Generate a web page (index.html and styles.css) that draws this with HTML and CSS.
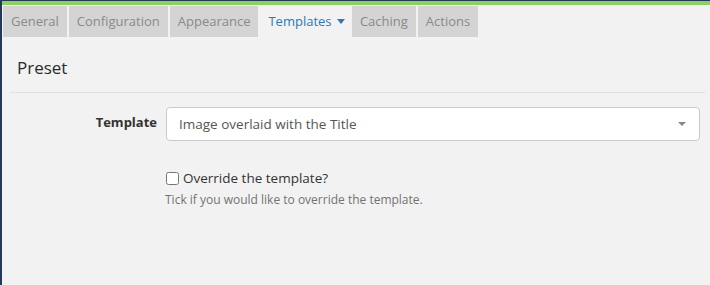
FILE: index.html
```html
<!DOCTYPE html>
<html lang="en">
<head>
  <meta charset="UTF-8">
  <title>Preset - Templates</title>
  <link rel="stylesheet" href="styles.css">
</head>
<body>

  <!-- TOP STRIP -->
  <div class="topbar"></div>

  <!-- TABS -->
  <ul class="tabs">
    <li><a href="#">General</a></li>
    <li><a href="#">Configuration</a></li>
    <li><a href="#">Appearance</a></li>
    <li class="active"><a href="#">Templates <span class="caret"></span></a></li>
    <li><a href="#">Caching</a></li>
    <li><a href="#">Actions</a></li>
  </ul>

  <!-- PANEL -->
  <section class="panel">
    <h2>Preset</h2>
    <hr>

    <div class="form-row">
      <label for="template">Template</label>
      <div class="select">
        <span>Image overlaid with the Title</span>
        <span class="select-arrow"></span>
      </div>
    </div>

    <div class="form-row">
      <div></div>
      <div>
        <label class="check"><input type="checkbox"> Override the template?</label>
        <p class="help">Tick if you would like to override the template.</p>
      </div>
    </div>
  </section>

</body>
</html>
```

FILE: styles.css
```css
/* === GENERAL === */
* { margin: 0; padding: 0; box-sizing: border-box; }
html, body { height: 100%; }
body {
  background-color: #f2f2f2; color: #333; font-family: 'Open Sans', sans-serif; font-size: 13px;
  border-left: 2px solid #23385a;
}
a { text-decoration: none; }

/* === TOP STRIP === */
.topbar { height: 5px; background-color: #8bd15c; border-top: 1px solid #23385a; }

/* === TABS === */
.tabs { display: flex; list-style: none; gap: 2px; margin: 1px 0 0 1px; }
.tabs li a {
  display: block; height: 31px; line-height: 31px; padding: 0 8px;
  background-color: #d4d4d4; color: #8a8a8a;
}
.tabs li.active a { background: none; color: #2a7ab9; padding-right: 5px; }
.caret {
  display: inline-block; width: 0; height: 0; margin-left: 2px; vertical-align: 2px;
  border-left: 4px solid transparent; border-right: 4px solid transparent; border-top: 5px solid #2a7ab9;
}

/* === PANEL === */
.panel { padding: 0 5px 0 8px; }
.panel h2 { font-size: 17px; font-weight: 400; padding: 19px 0 0 7px; line-height: 23px; color: #2b2b2b; }
.panel hr { border: none; border-top: 1px solid #e1e1e1; margin-top: 13px; }

.form-row { display: grid; grid-template-columns: 147px 1fr; column-gap: 9px; padding-right: 5px; }
.form-row:first-of-type { margin-top: 14px; }
.form-row > label { text-align: right; font-weight: 700; line-height: 30px; }

.select {
  display: flex; align-items: center; justify-content: space-between; height: 34px;
  background-color: #fff; border: 1px solid #cbcbcb; border-radius: 4px; padding: 0 12px;
  color: #555; font-size: 13.5px;
}
.select-arrow {
  width: 0; height: 0; margin-right: 1px;
  border-left: 4px solid transparent; border-right: 4px solid transparent; border-top: 4px solid #888;
}

.check { display: flex; align-items: center; gap: 4px; margin-top: 28px; line-height: 18px; font-size: 13.5px; }
.check input { width: 13px; height: 13px; margin: 0; }
.help { color: #737373; font-size: 12px; margin: 4px 0 0 -1px; }
```
